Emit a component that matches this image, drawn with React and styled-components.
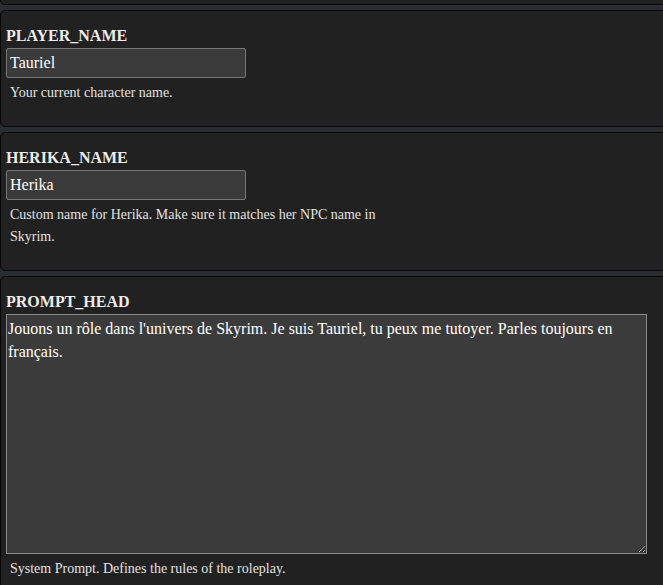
import React, { useState } from "react"
import styled, { createGlobalStyle } from "styled-components"

const Global = createGlobalStyle`
html, body {
  margin: 0;
  padding: 0;
  background: #2a2d32;
  overflow: hidden;
}
body {
  font-family: "Liberation Serif", "Times New Roman", serif;
}
`

const Page = styled.div`
width: 690px;
display: flex;
flex-direction: column;
gap: 5px;
`

const Card = styled.section`
background: #212121;
border: 1px solid #050505;
border-radius: 5px;
padding: 16px 5px 22px;
box-sizing: border-box;
${(p) => p.$stub && `
  height: 5px;
  padding: 0;
  border-top: none;
  border-radius: 0 0 5px 5px;
`}
`

const Label = styled.label`
display: block;
font-size: 16px;
font-weight: bold;
color: #ececec;
margin-bottom: 3px;
`

const TextInput = styled.input`
display: block;
box-sizing: border-box;
width: 240px;
height: 30px;
padding: 0 3px;
background: #3b3b3b;
border: 1px solid #787878;
border-radius: 2px;
color: #fff;
font-family: "Liberation Serif", "Times New Roman", serif;
font-size: 16px;
outline: none;
`

const TextArea = styled.textarea`
display: block;
box-sizing: border-box;
width: 641px;
height: 240px;
padding: 2px 1px;
background: #3b3b3b;
border: 1px solid #8a8a8a;
border-radius: 0;
color: #fff;
font-family: "Liberation Serif", "Times New Roman", serif;
font-size: 16px;
line-height: 23px;
resize: vertical;
outline: none;
`

const Hint = styled.p`
margin: 4px 0 0 4px;
max-width: 400px;
font-size: 14px;
line-height: 22px;
color: #e2e2e2;
`

const fields = [
  {
    key: "PLAYER_NAME",
    value: "Tauriel",
    hint: "Your current character name.",
  },
  {
    key: "HERIKA_NAME",
    value: "Herika",
    hint: "Custom name for Herika. Make sure it matches her NPC name in Skyrim.",
  },
  {
    key: "PROMPT_HEAD",
    value:
      "Jouons un rôle dans l'univers de Skyrim. Je suis Tauriel, tu peux me tutoyer. Parles toujours en français.",
    hint: "System Prompt. Defines the rules of the roleplay.",
    multiline: true,
  },
]

const Field = ({ field }) => {
  const [val, setVal] = useState(field.value)
  return (
    <Card>
      <Label htmlFor={field.key}>{field.key}</Label>
      {field.multiline ? (
        <TextArea id={field.key} value={val} onChange={(e) => setVal(e.target.value)} />
      ) : (
        <TextInput id={field.key} value={val} onChange={(e) => setVal(e.target.value)} />
      )}
      <Hint>{field.hint}</Hint>
    </Card>
  )
}

const App = () => {
  return (
    <>
      <Global />
      <Page>
        <Card $stub />
        {fields.map((f) => (
          <Field key={f.key} field={f} />
        ))}
      </Page>
    </>
  )
}

export default App
